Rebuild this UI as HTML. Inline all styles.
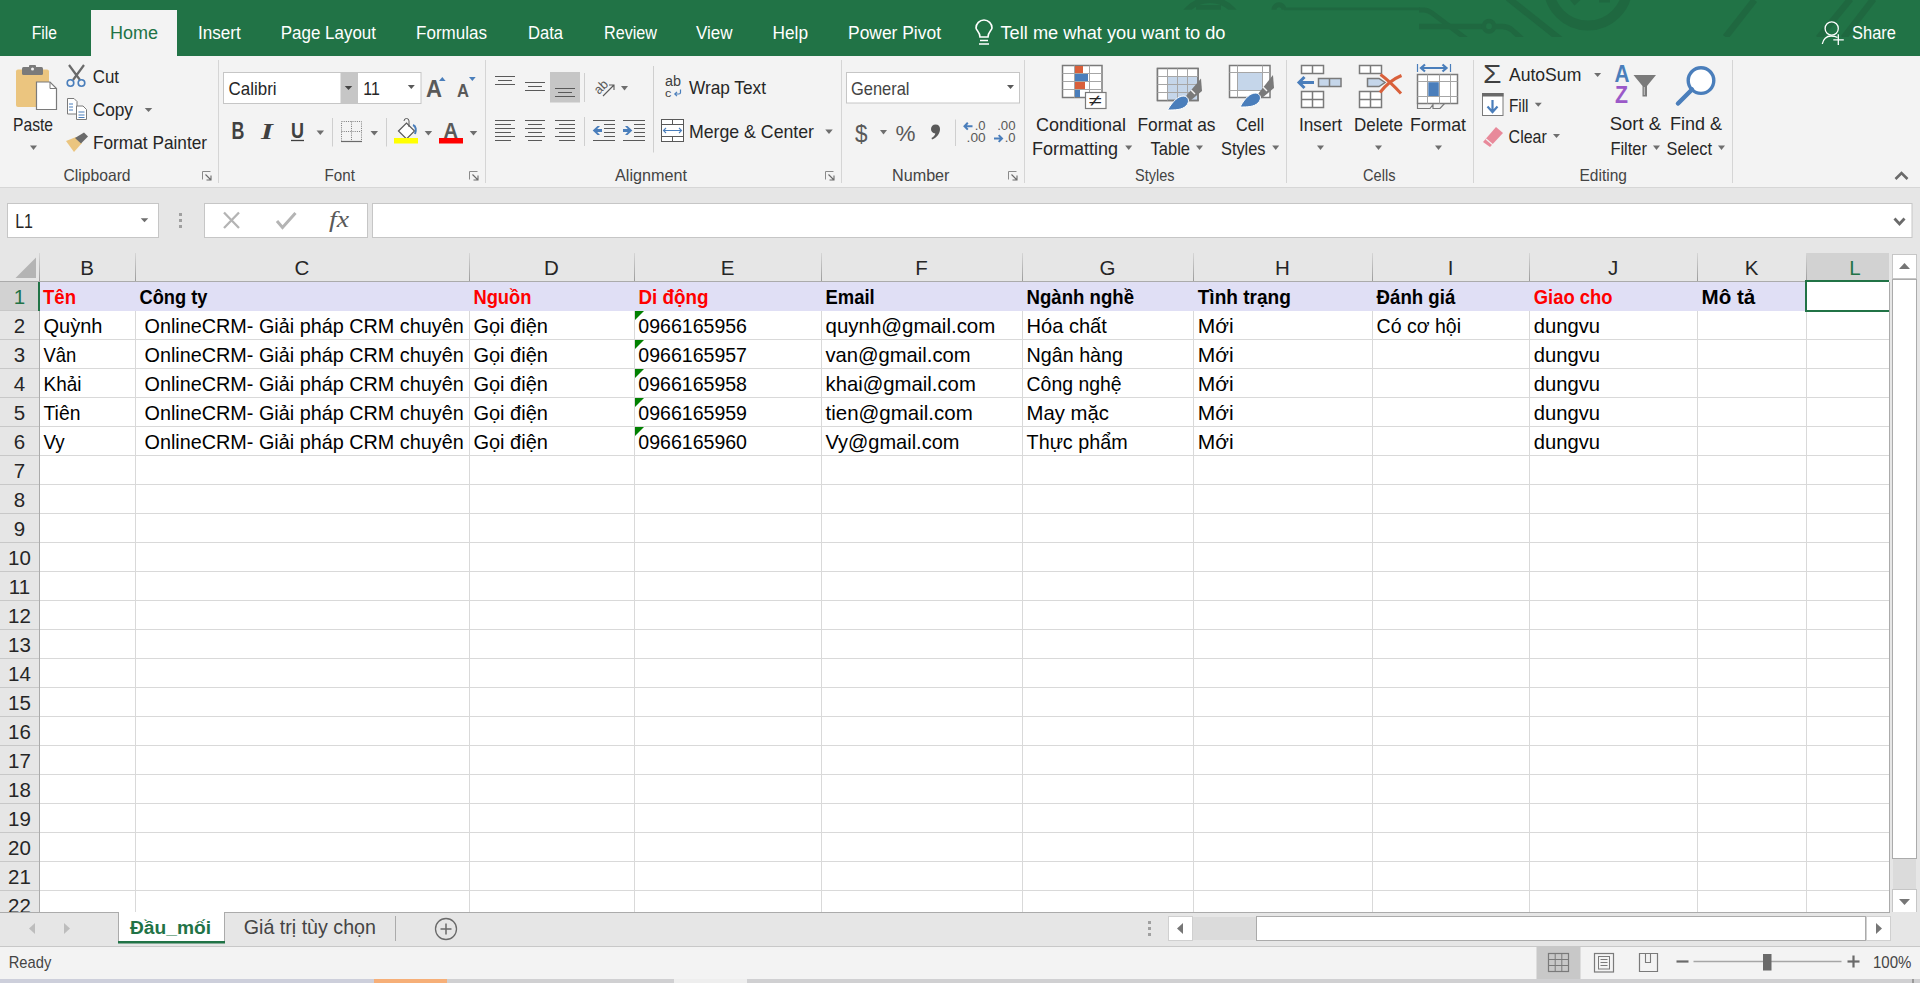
<!DOCTYPE html>
<html><head><meta charset="utf-8"><title>Excel</title>
<style>html,body{margin:0;padding:0;width:1920px;height:983px;overflow:hidden;background:#F3F3F3}
svg{display:block} text{font-family:"Liberation Sans",sans-serif}</style></head>
<body><svg width="1920" height="983" viewBox="0 0 1920 983" shape-rendering="geometricPrecision">
<rect x="0" y="0" width="1920" height="56" fill="#217346" />
<defs><clipPath id="cp"><rect x="1100" y="0" width="820" height="37"/></clipPath><clipPath id="cp2"><rect x="1100" y="0" width="200" height="9.8"/></clipPath></defs>
<g clip-path="url(#cp2)">
<circle cx="1210" cy="31" r="31" fill="none" stroke="#1F6840" stroke-width="6"/>
<rect x="1196" y="5" width="25" height="5" fill="#1F6840" />
<circle cx="1279" cy="9.8" r="5" fill="none" stroke="#1F6840" stroke-width="5"/>
</g>
<g clip-path="url(#cp)">
<path d="M1284,8.9 L1420,8.9" fill="none" stroke="#1F6840" stroke-width="2.6" />
<path d="M1419,10 L1424,10 C1427,10 1429,11 1432,13 L1467,39.5" fill="none" stroke="#1F6840" stroke-width="5" />
<path d="M1419,26.5 L1482,26.5" fill="none" stroke="#1F6840" stroke-width="5.5" />
<path d="M1450,17 L1470,39" fill="none" stroke="#1F6840" stroke-width="0" />
<circle cx="1489" cy="26.3" r="5.2" fill="none" stroke="#1F6840" stroke-width="4.5"/>
<path d="M1495,26.5 L1502,26.5 C1506,26.5 1509,27.5 1512,30 L1522,39" fill="none" stroke="#1F6840" stroke-width="5.5" />
<path d="M1508,-2 L1561,40" fill="none" stroke="#1F6840" stroke-width="6.5" />
<circle cx="1588" cy="-14" r="39.5" fill="none" stroke="#1F6840" stroke-width="10"/>
<path d="M1570,0 L1574.5,5.6 L1580.5,0 Z" fill="#1F6840" />
<rect x="1599" y="0" width="11" height="2.5" fill="#1F6840" />
<path d="M1754.5,0 L1725.5,37" fill="none" stroke="#1F6840" stroke-width="6.5" />
<path d="M1850.5,-1 L1818.5,38" fill="none" stroke="#1F6840" stroke-width="6.5" />
<path d="M1873.5,-1 L1843.5,38" fill="none" stroke="#1F6840" stroke-width="6.5" />
</g>
<rect x="91" y="10" width="86" height="46" fill="#F3F3F3" />
<text x="31.8" y="38.8" font-size="18.75" fill="#FFFFFF" textLength="25.2" lengthAdjust="spacingAndGlyphs">File</text>
<text x="197.9" y="38.8" font-size="18.75" fill="#FFFFFF" textLength="42.8" lengthAdjust="spacingAndGlyphs">Insert</text>
<text x="280.8" y="38.8" font-size="18.75" fill="#FFFFFF" textLength="95.2" lengthAdjust="spacingAndGlyphs">Page Layout</text>
<text x="416" y="38.8" font-size="18.75" fill="#FFFFFF" textLength="71.0" lengthAdjust="spacingAndGlyphs">Formulas</text>
<text x="528" y="38.8" font-size="18.75" fill="#FFFFFF" textLength="35.0" lengthAdjust="spacingAndGlyphs">Data</text>
<text x="604" y="38.8" font-size="18.75" fill="#FFFFFF" textLength="53.0" lengthAdjust="spacingAndGlyphs">Review</text>
<text x="696" y="38.8" font-size="18.75" fill="#FFFFFF" textLength="36.5" lengthAdjust="spacingAndGlyphs">View</text>
<text x="772.5" y="38.8" font-size="18.75" fill="#FFFFFF" textLength="35.5" lengthAdjust="spacingAndGlyphs">Help</text>
<text x="848" y="38.8" font-size="18.75" fill="#FFFFFF" textLength="93.0" lengthAdjust="spacingAndGlyphs">Power Pivot</text>
<text x="1000.5" y="38.8" font-size="18.75" fill="#FFFFFF" textLength="225.0" lengthAdjust="spacingAndGlyphs">Tell me what you want to do</text>
<text x="1852" y="38.8" font-size="18.75" fill="#FFFFFF" textLength="44.0" lengthAdjust="spacingAndGlyphs">Share</text>
<text x="110" y="38.8" font-size="18.75" fill="#217346" textLength="48.0" lengthAdjust="spacingAndGlyphs">Home</text>
<path d="M979,44 L989,44 M980,40.5 L988,40.5 M980,37 C980,32 976,30 976,28 A8,8 0 1 1 992,28 C992,30 988,32 988,37 Z" fill="none" stroke="#FFFFFF" stroke-width="1.6" />
<path d="M1822.3,44 C1823,39.5 1826.5,36 1831,36 C1833,36 1835.5,36.3 1837.5,37.5" fill="none" stroke="#FFFFFF" stroke-width="1.3" />
<circle cx="1831.7" cy="28.5" r="6.6" fill="none" stroke="#FFFFFF" stroke-width="1.3"/>
<path d="M1833.3,39.8 L1843.8,39.8 M1838.3,34.2 L1838.3,45" fill="none" stroke="#FFFFFF" stroke-width="1.3" />
<rect x="0" y="56" width="1920" height="131" fill="#F3F3F3" />
<line x1="0" y1="187.5" x2="1920" y2="187.5" stroke="#D6D6D6" stroke-width="1" />
<rect x="0" y="188" width="1920" height="65" fill="#E6E6E6" />
<line x1="218.5" y1="60" x2="218.5" y2="183" stroke="#D5D5D5" stroke-width="1" />
<line x1="485.5" y1="60" x2="485.5" y2="183" stroke="#D5D5D5" stroke-width="1" />
<line x1="841.5" y1="60" x2="841.5" y2="183" stroke="#D5D5D5" stroke-width="1" />
<line x1="1024.5" y1="60" x2="1024.5" y2="183" stroke="#D5D5D5" stroke-width="1" />
<line x1="1286.5" y1="60" x2="1286.5" y2="183" stroke="#D5D5D5" stroke-width="1" />
<line x1="1473.5" y1="60" x2="1473.5" y2="183" stroke="#D5D5D5" stroke-width="1" />
<line x1="1732.5" y1="60" x2="1732.5" y2="183" stroke="#D5D5D5" stroke-width="1" />
<text x="63.4" y="180.6" font-size="16.28" fill="#444444" textLength="67.2" lengthAdjust="spacingAndGlyphs">Clipboard</text>
<text x="324.6" y="180.6" font-size="16.28" fill="#444444" textLength="30.4" lengthAdjust="spacingAndGlyphs">Font</text>
<text x="615" y="180.6" font-size="16.28" fill="#444444" textLength="72.0" lengthAdjust="spacingAndGlyphs">Alignment</text>
<text x="892" y="180.6" font-size="16.28" fill="#444444" textLength="57.5" lengthAdjust="spacingAndGlyphs">Number</text>
<text x="1135" y="180.6" font-size="16.28" fill="#444444" textLength="39.5" lengthAdjust="spacingAndGlyphs">Styles</text>
<text x="1363" y="180.6" font-size="16.28" fill="#444444" textLength="32.5" lengthAdjust="spacingAndGlyphs">Cells</text>
<text x="1579.5" y="180.6" font-size="16.28" fill="#444444" textLength="47.5" lengthAdjust="spacingAndGlyphs">Editing</text>
<path d="M202.5,179.5 L202.5,171.5 L210.5,171.5" fill="none" stroke="#8A8A8A" stroke-width="1" />
<path d="M205.5,174.5 L211.0,180.0 M211.0,175.5 L211.0,180.0 L206.5,180.0" fill="none" stroke="#6A6A6A" stroke-width="1.1" />
<path d="M469.5,179.5 L469.5,171.5 L477.5,171.5" fill="none" stroke="#8A8A8A" stroke-width="1" />
<path d="M472.5,174.5 L478.0,180.0 M478.0,175.5 L478.0,180.0 L473.5,180.0" fill="none" stroke="#6A6A6A" stroke-width="1.1" />
<path d="M825.5,179.5 L825.5,171.5 L833.5,171.5" fill="none" stroke="#8A8A8A" stroke-width="1" />
<path d="M828.5,174.5 L834.0,180.0 M834.0,175.5 L834.0,180.0 L829.5,180.0" fill="none" stroke="#6A6A6A" stroke-width="1.1" />
<path d="M1008.5,179.5 L1008.5,171.5 L1016.5,171.5" fill="none" stroke="#8A8A8A" stroke-width="1" />
<path d="M1011.5,174.5 L1017.0,180.0 M1017.0,175.5 L1017.0,180.0 L1012.5,180.0" fill="none" stroke="#6A6A6A" stroke-width="1.1" />
<path d="M1895.5,179 L1901.5,173 L1907.5,179" fill="none" stroke="#6A6A6A" stroke-width="2.6" />
<rect x="16" y="69.5" width="33" height="37.5" fill="#EBC57F" rx="2"/>
<rect x="22" y="67" width="21" height="8" fill="#7A7A7A" rx="1.5"/>
<rect x="29" y="65" width="7" height="5" fill="#7A7A7A" rx="1"/>
<circle cx="32.5" cy="69" r="1.5" fill="#F3F3F3"/>
<path d="M36.5,82 L50,82 L56.5,88.5 L56.5,109.5 L36.5,109.5 Z" fill="#FFFFFF" stroke="#7A7A7A" stroke-width="1.2" />
<path d="M50,82 L50,88.5 L56.5,88.5" fill="none" stroke="#7A7A7A" stroke-width="1" />
<text x="13" y="131" font-size="18.60" fill="#262626" textLength="40.0" lengthAdjust="spacingAndGlyphs">Paste</text>
<path d="M30.0,145.5 L37.0,145.5 L33.5,150.0 Z" fill="#6E6E6E" />
<path d="M69,65 L80,80 M84,65 L73,80" fill="none" stroke="#6A6A6A" stroke-width="2.2" />
<circle cx="70.5" cy="83" r="3.3" fill="none" stroke="#4A7EBB" stroke-width="1.6"/>
<circle cx="81.5" cy="83" r="3.3" fill="none" stroke="#4A7EBB" stroke-width="1.6"/>
<text x="92.7" y="83" font-size="18.60" fill="#262626" textLength="26.3" lengthAdjust="spacingAndGlyphs">Cut</text>
<path d="M67.5,98.5 L74,98.5 L77,101.5 L77,114 L67.5,114 Z" fill="#FFFFFF" stroke="#7A7A7A" stroke-width="1" />
<path d="M76.5,106 L83,106 L86.5,109.5 L86.5,119.5 L76.5,119.5 Z" fill="#FFFFFF" stroke="#7A7A7A" stroke-width="1" />
<line x1="69" y1="104" x2="73" y2="104" stroke="#4A7EBB" stroke-width="1" />
<line x1="69" y1="107" x2="73" y2="107" stroke="#4A7EBB" stroke-width="1" />
<line x1="69" y1="110" x2="73" y2="110" stroke="#4A7EBB" stroke-width="1" />
<line x1="78.5" y1="112" x2="84.5" y2="112" stroke="#4A7EBB" stroke-width="1" />
<line x1="78.5" y1="115" x2="84.5" y2="115" stroke="#4A7EBB" stroke-width="1" />
<line x1="78.5" y1="117.5" x2="84.5" y2="117.5" stroke="#4A7EBB" stroke-width="1" />
<text x="92.7" y="115.5" font-size="18.60" fill="#262626" textLength="40.3" lengthAdjust="spacingAndGlyphs">Copy</text>
<path d="M144.75,108 L152.25,108 L148.5,112 Z" fill="#6E6E6E" />
<path d="M66,141 L76,137 L82,143 L74,152 Z" fill="#EBC57F" />
<path d="M75,138 L84,132.5 L88,136.5 L81,143.5 Z" fill="#6A6A6A" />
<text x="93" y="149" font-size="18.60" fill="#262626" textLength="114.0" lengthAdjust="spacingAndGlyphs">Format Painter</text>
<rect x="223.5" y="72.5" width="133" height="31" fill="#FFFFFF" stroke="#C6C6C6" stroke-width="1" />
<rect x="340.5" y="73" width="16" height="30" fill="#C6C6C6" />
<path d="M344.75,86 L352.25,86 L348.5,90 Z" fill="#444444" />
<text x="228.6" y="94.7" font-size="17.73" fill="#262626" textLength="48.0" lengthAdjust="spacingAndGlyphs">Calibri</text>
<rect x="357.5" y="72.5" width="63.5" height="31" fill="#FFFFFF" stroke="#C6C6C6" stroke-width="1" />
<text x="363.3" y="94.7" font-size="17.73" fill="#262626" textLength="16.5" lengthAdjust="spacingAndGlyphs">11</text>
<path d="M407.8,85 L414.8,85 L411.3,89 Z" fill="#595959" />
<text x="426" y="96.8" font-size="23.98" fill="#595959" font-weight="bold" textLength="16.0" lengthAdjust="spacingAndGlyphs">A</text>
<path d="M439,81 L442.3,77 L445.6,81 Z" fill="#4A7EBB" />
<text x="457" y="96.8" font-size="18.60" fill="#595959" font-weight="bold" textLength="12.0" lengthAdjust="spacingAndGlyphs">A</text>
<path d="M469,77 L475.7,77 L472.35,81 Z" fill="#4A7EBB" />
<text x="231.5" y="139" font-size="23.98" fill="#404040" font-weight="bold" textLength="12.9" lengthAdjust="spacingAndGlyphs">B</text>
<text x="261" y="139" font-size="23" fill="#404040" style="font-family:Liberation Serif;font-style:italic;font-weight:bold" textLength="12" lengthAdjust="spacingAndGlyphs">I</text>
<text x="291" y="138.2" font-size="22.97" fill="#404040" font-weight="bold" textLength="13.0" lengthAdjust="spacingAndGlyphs">U</text>
<line x1="291" y1="140.5" x2="304" y2="140.5" stroke="#404040" stroke-width="1.3" />
<path d="M316.55,130.5 L324.05,130.5 L320.3,135.0 Z" fill="#6E6E6E" />
<line x1="332.5" y1="118" x2="332.5" y2="146.5" stroke="#CFCFCF" stroke-width="1" />
<path d="M341.5,121.5 L361.5,121.5 L361.5,141.5 M341.5,141.5 L341.5,121.5 M351.5,121.5 L351.5,141.5 M341.5,131.5 L361.5,131.5" fill="none" stroke="#7A7A7A" stroke-width="1" stroke-dasharray="1,1.2"/>
<line x1="341" y1="141.5" x2="362" y2="141.5" stroke="#6A6A6A" stroke-width="1.2" />
<path d="M370.55,131 L378.05,131 L374.3,135.5 Z" fill="#6E6E6E" />
<line x1="386.5" y1="118" x2="386.5" y2="146.5" stroke="#CFCFCF" stroke-width="1" />
<path d="M398.5,131 L406.5,123 L414.5,131 L406.5,139 Z" fill="#FFFFFF" stroke="#595959" stroke-width="1.2" />
<path d="M404,121 A2.5,2.5 0 0 1 409,121 L409,127" fill="none" stroke="#595959" stroke-width="1" />
<path d="M413,125 C416,126 416.5,130 415,134" fill="none" stroke="#4A7EBB" stroke-width="2" />
<rect x="394" y="138" width="24" height="5.5" fill="#FFFF00" />
<path d="M424.65,131 L432.15,131 L428.4,135.5 Z" fill="#6E6E6E" />
<text x="443.5" y="137.6" font-size="22.67" fill="#595959" font-weight="bold" textLength="14.5" lengthAdjust="spacingAndGlyphs">A</text>
<rect x="439" y="138" width="24" height="5.5" fill="#FF0000" />
<path d="M469.75,131 L477.25,131 L473.5,135.5 Z" fill="#6E6E6E" />
<line x1="495" y1="76.5" x2="515" y2="76.5" stroke="#595959" stroke-width="1" />
<line x1="498" y1="80.5" x2="512" y2="80.5" stroke="#595959" stroke-width="1" />
<line x1="495" y1="84.5" x2="515" y2="84.5" stroke="#595959" stroke-width="1" />
<line x1="525" y1="82.5" x2="545" y2="82.5" stroke="#595959" stroke-width="1" />
<line x1="528" y1="86.5" x2="542" y2="86.5" stroke="#595959" stroke-width="1" />
<line x1="525" y1="90.5" x2="545" y2="90.5" stroke="#595959" stroke-width="1" />
<rect x="550" y="72" width="30" height="30.5" fill="#C6C6C6" />
<line x1="555" y1="88.5" x2="575" y2="88.5" stroke="#595959" stroke-width="1" />
<line x1="558" y1="92.5" x2="572" y2="92.5" stroke="#595959" stroke-width="1" />
<line x1="555" y1="96.5" x2="575" y2="96.5" stroke="#595959" stroke-width="1" />
<line x1="584.5" y1="73" x2="584.5" y2="102" stroke="#CFCFCF" stroke-width="1" />
<text x="0" y="0" font-size="13" fill="#595959" transform="translate(599,95) rotate(-45)" textLength="14" lengthAdjust="spacingAndGlyphs">ab</text>
<path d="M603,96 L614,85 M609,85 L614,85 L614,90" fill="none" stroke="#595959" stroke-width="1.1" />
<path d="M621.0,86 L628.0,86 L624.5,90.5 Z" fill="#6E6E6E" />
<line x1="653.5" y1="66" x2="653.5" y2="152.5" stroke="#CFCFCF" stroke-width="1" />
<text x="665" y="86" font-size="14.53" fill="#404040" textLength="16.0" lengthAdjust="spacingAndGlyphs">ab</text>
<text x="665" y="96.5" font-size="11.00" fill="#404040" textLength="6.3" lengthAdjust="spacingAndGlyphs">c</text>
<path d="M680.5,89.5 L680.5,92.5 C680.5,93.5 680,94 679,94 L675,94 M677,91.8 L674.8,94 L677,96.2" fill="none" stroke="#4A7EBB" stroke-width="1.2" />
<text x="689" y="94" font-size="18.60" fill="#262626" textLength="77.0" lengthAdjust="spacingAndGlyphs">Wrap Text</text>
<line x1="495" y1="120.5" x2="515" y2="120.5" stroke="#595959" stroke-width="1" />
<line x1="495" y1="124.5" x2="511" y2="124.5" stroke="#595959" stroke-width="1" />
<line x1="495" y1="128.5" x2="515" y2="128.5" stroke="#595959" stroke-width="1" />
<line x1="495" y1="132.5" x2="511" y2="132.5" stroke="#595959" stroke-width="1" />
<line x1="495" y1="136.5" x2="515" y2="136.5" stroke="#595959" stroke-width="1" />
<line x1="495" y1="140.5" x2="511" y2="140.5" stroke="#595959" stroke-width="1" />
<line x1="525" y1="120.5" x2="545" y2="120.5" stroke="#595959" stroke-width="1" />
<line x1="528" y1="124.5" x2="542" y2="124.5" stroke="#595959" stroke-width="1" />
<line x1="525" y1="128.5" x2="545" y2="128.5" stroke="#595959" stroke-width="1" />
<line x1="528" y1="132.5" x2="542" y2="132.5" stroke="#595959" stroke-width="1" />
<line x1="525" y1="136.5" x2="545" y2="136.5" stroke="#595959" stroke-width="1" />
<line x1="528" y1="140.5" x2="542" y2="140.5" stroke="#595959" stroke-width="1" />
<line x1="555" y1="120.5" x2="575" y2="120.5" stroke="#595959" stroke-width="1" />
<line x1="559" y1="124.5" x2="575" y2="124.5" stroke="#595959" stroke-width="1" />
<line x1="555" y1="128.5" x2="575" y2="128.5" stroke="#595959" stroke-width="1" />
<line x1="559" y1="132.5" x2="575" y2="132.5" stroke="#595959" stroke-width="1" />
<line x1="555" y1="136.5" x2="575" y2="136.5" stroke="#595959" stroke-width="1" />
<line x1="559" y1="140.5" x2="575" y2="140.5" stroke="#595959" stroke-width="1" />
<line x1="584.5" y1="117" x2="584.5" y2="146" stroke="#CFCFCF" stroke-width="1" />
<line x1="593" y1="120.5" x2="615" y2="120.5" stroke="#595959" stroke-width="1" />
<line x1="604" y1="124.5" x2="615" y2="124.5" stroke="#595959" stroke-width="1" />
<line x1="604" y1="128.5" x2="615" y2="128.5" stroke="#595959" stroke-width="1" />
<line x1="604" y1="132.5" x2="615" y2="132.5" stroke="#595959" stroke-width="1" />
<line x1="604" y1="136.5" x2="615" y2="136.5" stroke="#595959" stroke-width="1" />
<line x1="593" y1="140.5" x2="615" y2="140.5" stroke="#595959" stroke-width="1" />
<path d="M597.5,126 L592.7,130.5 L597.5,135 L600,135 L597.2,132 L602,132 L602,129 L597.2,129 L600,126 Z" fill="#4A7EBB" />
<line x1="623" y1="120.5" x2="645" y2="120.5" stroke="#595959" stroke-width="1" />
<line x1="634" y1="124.5" x2="645" y2="124.5" stroke="#595959" stroke-width="1" />
<line x1="634" y1="128.5" x2="645" y2="128.5" stroke="#595959" stroke-width="1" />
<line x1="634" y1="132.5" x2="645" y2="132.5" stroke="#595959" stroke-width="1" />
<line x1="634" y1="136.5" x2="645" y2="136.5" stroke="#595959" stroke-width="1" />
<line x1="623" y1="140.5" x2="645" y2="140.5" stroke="#595959" stroke-width="1" />
<path d="M627.5,126 L632.3,130.5 L627.5,135 L625,135 L627.8,132 L623,132 L623,129 L627.8,129 L625,126 Z" fill="#4A7EBB" />
<rect x="661.5" y="119.5" width="22" height="22" fill="#FFFFFF" stroke="#595959" stroke-width="1" />
<line x1="661.5" y1="124.5" x2="683.5" y2="124.5" stroke="#595959" stroke-width="1" />
<line x1="661.5" y1="136.5" x2="683.5" y2="136.5" stroke="#595959" stroke-width="1" />
<line x1="672.5" y1="119.5" x2="672.5" y2="124.5" stroke="#595959" stroke-width="1" />
<line x1="672.5" y1="136.5" x2="672.5" y2="141.5" stroke="#595959" stroke-width="1" />
<path d="M663.5,130.5 L681.5,130.5 M666,128 L663.5,130.5 L666,133 M679,128 L681.5,130.5 L679,133" fill="none" stroke="#4A7EBB" stroke-width="1.1" />
<text x="689" y="138" font-size="18.60" fill="#262626" textLength="125.0" lengthAdjust="spacingAndGlyphs">Merge &amp; Center</text>
<path d="M825.25,129.5 L832.75,129.5 L829,134.0 Z" fill="#6E6E6E" />
<rect x="846.5" y="72.5" width="173" height="30.5" fill="#FFFFFF" stroke="#C6C6C6" stroke-width="1" />
<text x="851" y="95" font-size="18.60" fill="#444444" textLength="58.5" lengthAdjust="spacingAndGlyphs">General</text>
<path d="M1007.0,85 L1014.0,85 L1010.5,89 Z" fill="#595959" />
<text x="855" y="141.5" font-size="23.98" fill="#595959" textLength="12.5" lengthAdjust="spacingAndGlyphs">$</text>
<path d="M880.0,130 L887.0,130 L883.5,134.5 Z" fill="#6E6E6E" />
<text x="895.5" y="141" font-size="21.80" fill="#595959" textLength="20.0" lengthAdjust="spacingAndGlyphs">%</text>
<path d="M935.5,124.5 C938.5,124.5 940,126.5 940,129 C940,133.5 937,137.5 932,139.5 L931.5,138 C934,136.5 935,135 935.3,133.5 C932.5,133.3 931,131.5 931,129 C931,126.5 933,124.5 935.5,124.5 Z" fill="#595959" />
<line x1="955.5" y1="119.5" x2="955.5" y2="146" stroke="#CFCFCF" stroke-width="1" />
<text x="974.7" y="129.6" font-size="11.92" fill="#595959" textLength="10.9" lengthAdjust="spacingAndGlyphs">.0</text>
<text x="966.6" y="141.9" font-size="11.92" fill="#595959" textLength="19.0" lengthAdjust="spacingAndGlyphs">.00</text>
<path d="M964.5,126.2 L972.5,126.2 M967.8,122.8 L964.5,126.2 L967.8,129.6" fill="none" stroke="#4A7EBB" stroke-width="2" />
<text x="997.2" y="129.6" font-size="11.92" fill="#595959" textLength="18.4" lengthAdjust="spacingAndGlyphs">.00</text>
<text x="1004.7" y="141.9" font-size="11.92" fill="#595959" textLength="10.9" lengthAdjust="spacingAndGlyphs">.0</text>
<path d="M994,138.5 L1002,138.5 M998.7,135.1 L1002,138.5 L998.7,141.9" fill="none" stroke="#4A7EBB" stroke-width="2" />
<rect x="1062.5" y="65.5" width="39.5" height="32" fill="#FFFFFF" stroke="#7A7A7A" stroke-width="1.5" />
<line x1="1074.5" y1="65.5" x2="1074.5" y2="97.5" stroke="#A6A6A6" stroke-width="1" />
<line x1="1089.5" y1="65.5" x2="1089.5" y2="97.5" stroke="#A6A6A6" stroke-width="1" />
<line x1="1062.5" y1="73.5" x2="1102" y2="73.5" stroke="#A6A6A6" stroke-width="1" />
<line x1="1062.5" y1="81.5" x2="1102" y2="81.5" stroke="#A6A6A6" stroke-width="1" />
<line x1="1062.5" y1="89.5" x2="1102" y2="89.5" stroke="#A6A6A6" stroke-width="1" />
<rect x="1075" y="66" width="8" height="7" fill="#D9603B" />
<rect x="1075" y="74" width="13" height="7" fill="#4A7EBB" />
<rect x="1075" y="82" width="10" height="7" fill="#D9603B" />
<rect x="1075" y="90" width="5" height="7" fill="#4A7EBB" />
<rect x="1085.5" y="92.5" width="20.5" height="16" fill="#FFFFFF" stroke="#7A7A7A" stroke-width="1.2" />
<text x="1089" y="106" font-size="16" fill="#262626" textLength="13" lengthAdjust="spacingAndGlyphs">≠</text>
<text x="1036" y="131" font-size="18.60" fill="#262626" textLength="90.0" lengthAdjust="spacingAndGlyphs">Conditional</text>
<text x="1032" y="155" font-size="18.60" fill="#262626" textLength="86.0" lengthAdjust="spacingAndGlyphs">Formatting</text>
<path d="M1125.2,145.5 L1132.2,145.5 L1128.7,150.0 Z" fill="#6E6E6E" />
<rect x="1167.5" y="76" width="30.5" height="24.5" fill="#C5D6EA" />
<rect x="1157.5" y="68.5" width="40.5" height="32" fill="none" stroke="#7A7A7A" stroke-width="1.5" />
<path d="M1158,69 L1198,69 L1198,76 L1167.5,76 L1167.5,100 L1158,100 Z" fill="#FFFFFF"/>
<rect x="1157.5" y="68.5" width="40.5" height="32" fill="none" stroke="#7A7A7A" stroke-width="1.5" />
<line x1="1167.5" y1="68.5" x2="1167.5" y2="100.5" stroke="#A6A6A6" stroke-width="1" />
<line x1="1177.5" y1="68.5" x2="1177.5" y2="100.5" stroke="#A6A6A6" stroke-width="1" />
<line x1="1187.5" y1="68.5" x2="1187.5" y2="100.5" stroke="#A6A6A6" stroke-width="1" />
<line x1="1157.5" y1="76.5" x2="1198" y2="76.5" stroke="#A6A6A6" stroke-width="1" />
<line x1="1157.5" y1="84.5" x2="1198" y2="84.5" stroke="#A6A6A6" stroke-width="1" />
<line x1="1157.5" y1="92.5" x2="1198" y2="92.5" stroke="#A6A6A6" stroke-width="1" />
<path d="M1186,96 L1201,78.5 L1202,91 L1190,101 Z" fill="#7A7A7A" />
<path d="M1191,90 L1195,94" fill="none" stroke="#F3F3F3" stroke-width="1.5" />
<path d="M1167.5,110 C1173,101 1178,96 1184,96 C1189,97 1190,102 1186,106 C1182,110 1175,110 1167.5,110 Z" fill="#4A7EBB" stroke="#FFFFFF" stroke-width="1" />
<text x="1137.5" y="131" font-size="18.60" fill="#262626" textLength="78.0" lengthAdjust="spacingAndGlyphs">Format as</text>
<text x="1150.5" y="155" font-size="18.60" fill="#262626" textLength="39.5" lengthAdjust="spacingAndGlyphs">Table</text>
<path d="M1196.0,145.5 L1203.0,145.5 L1199.5,150.0 Z" fill="#6E6E6E" />
<rect x="1229.5" y="65.5" width="40.5" height="32" fill="#FFFFFF" stroke="#7A7A7A" stroke-width="1.5" />
<rect x="1237.5" y="72.5" width="25" height="18" fill="#C5D6EA" />
<line x1="1237.5" y1="65.5" x2="1237.5" y2="97.5" stroke="#A6A6A6" stroke-width="1" />
<line x1="1262.5" y1="65.5" x2="1262.5" y2="97.5" stroke="#A6A6A6" stroke-width="1" />
<line x1="1229.5" y1="72.5" x2="1270" y2="72.5" stroke="#A6A6A6" stroke-width="1" />
<line x1="1229.5" y1="90.5" x2="1270" y2="90.5" stroke="#A6A6A6" stroke-width="1" />
<path d="M1258,94 L1273,75 L1274,88 L1262,98 Z" fill="#7A7A7A" />
<path d="M1263,87 L1267,91" fill="none" stroke="#F3F3F3" stroke-width="1.5" />
<path d="M1240,107 C1245,98 1250,93 1256,93 C1261,94 1262,99 1258,103 C1254,107 1247,107 1240,107 Z" fill="#4A7EBB" stroke="#FFFFFF" stroke-width="1" />
<text x="1236" y="131" font-size="18.60" fill="#262626" textLength="28.0" lengthAdjust="spacingAndGlyphs">Cell</text>
<text x="1221" y="155" font-size="18.60" fill="#262626" textLength="44.5" lengthAdjust="spacingAndGlyphs">Styles</text>
<path d="M1272.2,145.5 L1279.2,145.5 L1275.7,150.0 Z" fill="#6E6E6E" />
<rect x="1301.5" y="65.5" width="22" height="8" fill="#FFFFFF" stroke="#7A7A7A" stroke-width="1.5" />
<line x1="1312.5" y1="65.5" x2="1312.5" y2="73.5" stroke="#7A7A7A" stroke-width="1.5" />
<rect x="1318.5" y="78.5" width="22.5" height="8" fill="#C5D6EA" stroke="#7A7A7A" stroke-width="1.5" />
<line x1="1329.5" y1="78.5" x2="1329.5" y2="86.5" stroke="#7A7A7A" stroke-width="1.5" />
<rect x="1301.5" y="91.5" width="22" height="16" fill="#FFFFFF" stroke="#7A7A7A" stroke-width="1.5" />
<line x1="1312.5" y1="91.5" x2="1312.5" y2="107.5" stroke="#7A7A7A" stroke-width="1.5" />
<line x1="1301.5" y1="99.5" x2="1323.5" y2="99.5" stroke="#7A7A7A" stroke-width="1.5" />
<path d="M1314,82.5 L1301,82.5 M1304.5,77 L1299,82.5 L1304.5,88" fill="none" stroke="#4A7EBB" stroke-width="3" />
<text x="1299" y="131" font-size="18.60" fill="#262626" textLength="43.0" lengthAdjust="spacingAndGlyphs">Insert</text>
<path d="M1317.0,145.5 L1324.0,145.5 L1320.5,150.0 Z" fill="#6E6E6E" />
<rect x="1359.5" y="65.5" width="22" height="8" fill="#FFFFFF" stroke="#7A7A7A" stroke-width="1.5" />
<line x1="1370.5" y1="65.5" x2="1370.5" y2="73.5" stroke="#7A7A7A" stroke-width="1.5" />
<path d="M1367.5,78.5 L1379,78.5 L1385,82.5 L1379,86.5 L1367.5,86.5 Z" fill="#C5D6EA" stroke="#7A7A7A" stroke-width="1.5" />
<rect x="1359.5" y="91.5" width="22" height="16" fill="#FFFFFF" stroke="#7A7A7A" stroke-width="1.5" />
<line x1="1370.5" y1="91.5" x2="1370.5" y2="107.5" stroke="#7A7A7A" stroke-width="1.5" />
<line x1="1359.5" y1="99.5" x2="1381.5" y2="99.5" stroke="#7A7A7A" stroke-width="1.5" />
<path d="M1380.5,74.5 C1388,80 1395,87 1401,93.5 M1401.5,75.5 C1393,79 1385,86 1380,92.5" fill="none" stroke="#D9603B" stroke-width="3" />
<text x="1354" y="131" font-size="18.60" fill="#262626" textLength="49.0" lengthAdjust="spacingAndGlyphs">Delete</text>
<path d="M1375.0,145.5 L1382.0,145.5 L1378.5,150.0 Z" fill="#6E6E6E" />
<rect x="1417.5" y="74.5" width="40" height="29" fill="#FFFFFF" stroke="#7A7A7A" stroke-width="1.5" />
<line x1="1427.5" y1="74.5" x2="1427.5" y2="103.5" stroke="#A6A6A6" stroke-width="1" />
<line x1="1439.5" y1="74.5" x2="1439.5" y2="103.5" stroke="#A6A6A6" stroke-width="1" />
<line x1="1450.5" y1="74.5" x2="1450.5" y2="103.5" stroke="#A6A6A6" stroke-width="1" />
<line x1="1417.5" y1="81.5" x2="1457.5" y2="81.5" stroke="#A6A6A6" stroke-width="1" />
<line x1="1417.5" y1="96.5" x2="1457.5" y2="96.5" stroke="#A6A6A6" stroke-width="1" />
<rect x="1428.3" y="82.2" width="10.5" height="13.8" fill="#4A7EBB" />
<path d="M1417.5,103.5 L1417.5,108.5 L1430,108.5 L1433,104.5 L1433,108.5 L1440,108.5 L1444.5,103.5" fill="none" stroke="#7A7A7A" stroke-width="1.2" />
<path d="M1421,68 L1446.5,68 M1425,64.5 L1421,68 L1425,71.5 M1442.5,64.5 L1446.5,68 L1442.5,71.5" fill="none" stroke="#4A7EBB" stroke-width="2.2" />
<line x1="1417.5" y1="64" x2="1417.5" y2="72" stroke="#4A7EBB" stroke-width="1.2" />
<line x1="1450.5" y1="64" x2="1450.5" y2="72" stroke="#4A7EBB" stroke-width="1.2" />
<text x="1410" y="131" font-size="18.60" fill="#262626" textLength="56.0" lengthAdjust="spacingAndGlyphs">Format</text>
<path d="M1435.0,145.5 L1442.0,145.5 L1438.5,150.0 Z" fill="#6E6E6E" />
<text x="1483" y="83" font-size="26" fill="#404040" textLength="18.5" lengthAdjust="spacingAndGlyphs">Σ</text>
<text x="1508.9" y="81" font-size="18.60" fill="#262626" textLength="72.4" lengthAdjust="spacingAndGlyphs">AutoSum</text>
<path d="M1594.1,73 L1601.1,73 L1597.6,77 Z" fill="#6E6E6E" />
<rect x="1482.5" y="93.5" width="20.5" height="22" fill="#FFFFFF" stroke="#7A7A7A" stroke-width="1" />
<rect x="1482" y="93" width="21.5" height="3.5" fill="#6A6A6A" />
<path d="M1492.5,100 L1492.5,112 M1487.5,106.5 L1492.5,112 L1497.5,106.5" fill="none" stroke="#4A7EBB" stroke-width="2.2" />
<text x="1508.9" y="111.5" font-size="18.60" fill="#262626" textLength="19.6" lengthAdjust="spacingAndGlyphs">Fill</text>
<path d="M1534.8,102.7 L1541.8,102.7 L1538.3,106.7 Z" fill="#6E6E6E" />
<path d="M1483,142 L1496,127 L1503,133 L1490,147 Z" fill="#E8899A" />
<path d="M1486,139 L1493,145" fill="none" stroke="#F3F3F3" stroke-width="1.3" />
<text x="1508.6" y="142.6" font-size="18.60" fill="#262626" textLength="38.2" lengthAdjust="spacingAndGlyphs">Clear</text>
<path d="M1553.0,134 L1560.0,134 L1556.5,138 Z" fill="#6E6E6E" />
<text x="1614.5" y="81.7" font-size="24" font-weight="bold" fill="#4A7EBB" textLength="15" lengthAdjust="spacingAndGlyphs">A</text>
<text x="1615" y="102.7" font-size="23" font-weight="bold" fill="#9B59C8" textLength="13" lengthAdjust="spacingAndGlyphs">Z</text>
<path d="M1633.5,75 L1656,75 L1647,86 L1647,96.5 L1642.5,96.5 L1642.5,86 Z" fill="#7A7A7A" />
<path d="M1644.3,87 L1644.3,95" fill="none" stroke="#C8C8C8" stroke-width="1" />
<circle cx="1701" cy="80.6" r="12.8" fill="#FFFFFF" stroke="#4A7EBB" stroke-width="3.4"/>
<path d="M1692,89.5 L1678,103.5" fill="none" stroke="#4A7EBB" stroke-width="4.5" stroke-linecap="round"/>
<text x="1609.7" y="130.4" font-size="18.60" fill="#262626" textLength="51.5" lengthAdjust="spacingAndGlyphs">Sort &amp;</text>
<text x="1670" y="130.4" font-size="18.60" fill="#262626" textLength="52.0" lengthAdjust="spacingAndGlyphs">Find &amp;</text>
<text x="1610.4" y="154.5" font-size="18.60" fill="#262626" textLength="36.6" lengthAdjust="spacingAndGlyphs">Filter</text>
<text x="1666.6" y="154.5" font-size="18.60" fill="#262626" textLength="45.4" lengthAdjust="spacingAndGlyphs">Select</text>
<path d="M1653.0,145.5 L1660.0,145.5 L1656.5,150.0 Z" fill="#6E6E6E" />
<path d="M1718.0,145.5 L1725.0,145.5 L1721.5,150.0 Z" fill="#6E6E6E" />
<rect x="7.5" y="203.5" width="151" height="34" fill="#FFFFFF" stroke="#C6C6C6" stroke-width="1" />
<text x="15.2" y="227.7" font-size="19.33" fill="#262626" textLength="17.8" lengthAdjust="spacingAndGlyphs">L1</text>
<path d="M140.75,218.2 L148.25,218.2 L144.5,222.2 Z" fill="#6E6E6E" />
<rect x="179" y="213" width="3" height="3" fill="#A0A0A0" />
<rect x="179" y="219" width="3" height="3" fill="#A0A0A0" />
<rect x="179" y="225" width="3" height="3" fill="#A0A0A0" />
<rect x="204.5" y="203.5" width="163" height="34" fill="#FFFFFF" stroke="#C6C6C6" stroke-width="1" />
<path d="M224,212.5 L239,228 M239,212.5 L224,228" fill="none" stroke="#B4B4B4" stroke-width="2.3" />
<path d="M277,221 L282.5,227.5 L295.5,213" fill="none" stroke="#B4B4B4" stroke-width="3" />
<text x="329" y="226.5" font-size="24" style="font-family:Liberation Serif;font-style:italic" fill="#595959" textLength="20" lengthAdjust="spacingAndGlyphs">fx</text>
<rect x="372.5" y="203.5" width="1539.5" height="34" fill="#FFFFFF" stroke="#C6C6C6" stroke-width="1" />
<path d="M1894.5,218.5 L1899.5,224 L1904.5,218.5" fill="none" stroke="#6A6A6A" stroke-width="2.8" />
<rect x="0" y="253" width="1890" height="28" fill="#E6E6E6" />
<rect x="1806" y="253" width="83" height="28" fill="#D2D2D2" />
<defs><linearGradient id="hg" x1="0" y1="0" x2="0" y2="1"><stop offset="0" stop-color="#D6D6D6"/><stop offset="1" stop-color="#9C9C9C"/></linearGradient></defs>
<rect x="135" y="253" width="1" height="28" fill="url(#hg)" />
<rect x="469" y="253" width="1" height="28" fill="url(#hg)" />
<rect x="634" y="253" width="1" height="28" fill="url(#hg)" />
<rect x="821" y="253" width="1" height="28" fill="url(#hg)" />
<rect x="1022" y="253" width="1" height="28" fill="url(#hg)" />
<rect x="1193" y="253" width="1" height="28" fill="url(#hg)" />
<rect x="1372" y="253" width="1" height="28" fill="url(#hg)" />
<rect x="1529" y="253" width="1" height="28" fill="url(#hg)" />
<rect x="1697" y="253" width="1" height="28" fill="url(#hg)" />
<rect x="1806" y="253" width="1" height="28" fill="url(#hg)" />
<path d="M15.5,278 L36,278 L36,257.5 Z" fill="#B4B4B4" />
<rect x="39" y="253" width="1" height="28" fill="url(#hg)" />
<line x1="0" y1="281.5" x2="1889" y2="281.5" stroke="#ABABAB" stroke-width="1" />
<text x="87.0" y="275" font-size="20.5" fill="#262626" text-anchor="middle">B</text>
<text x="302.0" y="275" font-size="20.5" fill="#262626" text-anchor="middle">C</text>
<text x="551.5" y="275" font-size="20.5" fill="#262626" text-anchor="middle">D</text>
<text x="727.5" y="275" font-size="20.5" fill="#262626" text-anchor="middle">E</text>
<text x="921.5" y="275" font-size="20.5" fill="#262626" text-anchor="middle">F</text>
<text x="1107.5" y="275" font-size="20.5" fill="#262626" text-anchor="middle">G</text>
<text x="1282.5" y="275" font-size="20.5" fill="#262626" text-anchor="middle">H</text>
<text x="1450.5" y="275" font-size="20.5" fill="#262626" text-anchor="middle">I</text>
<text x="1613.0" y="275" font-size="20.5" fill="#262626" text-anchor="middle">J</text>
<text x="1751.5" y="275" font-size="20.5" fill="#262626" text-anchor="middle">K</text>
<text x="1855" y="275" font-size="20.5" fill="#217346" text-anchor="middle">L</text>
<rect x="40" y="282" width="1849" height="630" fill="#FFFFFF" />
<rect x="40" y="282" width="1766" height="29" fill="#E0DFF5" />
<rect x="0" y="282" width="39" height="630" fill="#E6E6E6" />
<rect x="0" y="282" width="39" height="29" fill="#D2D2D2" />
<line x1="0" y1="310.5" x2="39" y2="310.5" stroke="#C8C8C8" stroke-width="1" />
<line x1="1806" y1="310.5" x2="1889" y2="310.5" stroke="#D9D9D9" stroke-width="1" />
<line x1="0" y1="339.5" x2="39" y2="339.5" stroke="#C8C8C8" stroke-width="1" />
<line x1="40" y1="339.5" x2="1889" y2="339.5" stroke="#D9D9D9" stroke-width="1" />
<line x1="0" y1="368.5" x2="39" y2="368.5" stroke="#C8C8C8" stroke-width="1" />
<line x1="40" y1="368.5" x2="1889" y2="368.5" stroke="#D9D9D9" stroke-width="1" />
<line x1="0" y1="397.5" x2="39" y2="397.5" stroke="#C8C8C8" stroke-width="1" />
<line x1="40" y1="397.5" x2="1889" y2="397.5" stroke="#D9D9D9" stroke-width="1" />
<line x1="0" y1="426.5" x2="39" y2="426.5" stroke="#C8C8C8" stroke-width="1" />
<line x1="40" y1="426.5" x2="1889" y2="426.5" stroke="#D9D9D9" stroke-width="1" />
<line x1="0" y1="455.5" x2="39" y2="455.5" stroke="#C8C8C8" stroke-width="1" />
<line x1="40" y1="455.5" x2="1889" y2="455.5" stroke="#D9D9D9" stroke-width="1" />
<line x1="0" y1="484.5" x2="39" y2="484.5" stroke="#C8C8C8" stroke-width="1" />
<line x1="40" y1="484.5" x2="1889" y2="484.5" stroke="#D9D9D9" stroke-width="1" />
<line x1="0" y1="513.5" x2="39" y2="513.5" stroke="#C8C8C8" stroke-width="1" />
<line x1="40" y1="513.5" x2="1889" y2="513.5" stroke="#D9D9D9" stroke-width="1" />
<line x1="0" y1="542.5" x2="39" y2="542.5" stroke="#C8C8C8" stroke-width="1" />
<line x1="40" y1="542.5" x2="1889" y2="542.5" stroke="#D9D9D9" stroke-width="1" />
<line x1="0" y1="571.5" x2="39" y2="571.5" stroke="#C8C8C8" stroke-width="1" />
<line x1="40" y1="571.5" x2="1889" y2="571.5" stroke="#D9D9D9" stroke-width="1" />
<line x1="0" y1="600.5" x2="39" y2="600.5" stroke="#C8C8C8" stroke-width="1" />
<line x1="40" y1="600.5" x2="1889" y2="600.5" stroke="#D9D9D9" stroke-width="1" />
<line x1="0" y1="629.5" x2="39" y2="629.5" stroke="#C8C8C8" stroke-width="1" />
<line x1="40" y1="629.5" x2="1889" y2="629.5" stroke="#D9D9D9" stroke-width="1" />
<line x1="0" y1="658.5" x2="39" y2="658.5" stroke="#C8C8C8" stroke-width="1" />
<line x1="40" y1="658.5" x2="1889" y2="658.5" stroke="#D9D9D9" stroke-width="1" />
<line x1="0" y1="687.5" x2="39" y2="687.5" stroke="#C8C8C8" stroke-width="1" />
<line x1="40" y1="687.5" x2="1889" y2="687.5" stroke="#D9D9D9" stroke-width="1" />
<line x1="0" y1="716.5" x2="39" y2="716.5" stroke="#C8C8C8" stroke-width="1" />
<line x1="40" y1="716.5" x2="1889" y2="716.5" stroke="#D9D9D9" stroke-width="1" />
<line x1="0" y1="745.5" x2="39" y2="745.5" stroke="#C8C8C8" stroke-width="1" />
<line x1="40" y1="745.5" x2="1889" y2="745.5" stroke="#D9D9D9" stroke-width="1" />
<line x1="0" y1="774.5" x2="39" y2="774.5" stroke="#C8C8C8" stroke-width="1" />
<line x1="40" y1="774.5" x2="1889" y2="774.5" stroke="#D9D9D9" stroke-width="1" />
<line x1="0" y1="803.5" x2="39" y2="803.5" stroke="#C8C8C8" stroke-width="1" />
<line x1="40" y1="803.5" x2="1889" y2="803.5" stroke="#D9D9D9" stroke-width="1" />
<line x1="0" y1="832.5" x2="39" y2="832.5" stroke="#C8C8C8" stroke-width="1" />
<line x1="40" y1="832.5" x2="1889" y2="832.5" stroke="#D9D9D9" stroke-width="1" />
<line x1="0" y1="861.5" x2="39" y2="861.5" stroke="#C8C8C8" stroke-width="1" />
<line x1="40" y1="861.5" x2="1889" y2="861.5" stroke="#D9D9D9" stroke-width="1" />
<line x1="0" y1="890.5" x2="39" y2="890.5" stroke="#C8C8C8" stroke-width="1" />
<line x1="40" y1="890.5" x2="1889" y2="890.5" stroke="#D9D9D9" stroke-width="1" />
<line x1="0" y1="919.5" x2="39" y2="919.5" stroke="#C8C8C8" stroke-width="1" />
<line x1="40" y1="919.5" x2="1889" y2="919.5" stroke="#D9D9D9" stroke-width="1" />
<line x1="135.5" y1="311" x2="135.5" y2="912" stroke="#D9D9D9" stroke-width="1" />
<line x1="469.5" y1="311" x2="469.5" y2="912" stroke="#D9D9D9" stroke-width="1" />
<line x1="634.5" y1="311" x2="634.5" y2="912" stroke="#D9D9D9" stroke-width="1" />
<line x1="821.5" y1="311" x2="821.5" y2="912" stroke="#D9D9D9" stroke-width="1" />
<line x1="1022.5" y1="311" x2="1022.5" y2="912" stroke="#D9D9D9" stroke-width="1" />
<line x1="1193.5" y1="311" x2="1193.5" y2="912" stroke="#D9D9D9" stroke-width="1" />
<line x1="1372.5" y1="311" x2="1372.5" y2="912" stroke="#D9D9D9" stroke-width="1" />
<line x1="1529.5" y1="311" x2="1529.5" y2="912" stroke="#D9D9D9" stroke-width="1" />
<line x1="1697.5" y1="311" x2="1697.5" y2="912" stroke="#D9D9D9" stroke-width="1" />
<line x1="1806.5" y1="311" x2="1806.5" y2="912" stroke="#D9D9D9" stroke-width="1" />
<line x1="39.5" y1="281" x2="39.5" y2="912" stroke="#ABABAB" stroke-width="1" />
<line x1="39" y1="282" x2="39" y2="311" stroke="#217346" stroke-width="2" />
<line x1="1889.5" y1="282" x2="1889.5" y2="912" stroke="#ABABAB" stroke-width="1" />
<text x="19.5" y="304.4" font-size="20.5" fill="#217346" text-anchor="middle">1</text>
<text x="19.5" y="333.4" font-size="20.5" fill="#262626" text-anchor="middle">2</text>
<text x="19.5" y="362.4" font-size="20.5" fill="#262626" text-anchor="middle">3</text>
<text x="19.5" y="391.4" font-size="20.5" fill="#262626" text-anchor="middle">4</text>
<text x="19.5" y="420.4" font-size="20.5" fill="#262626" text-anchor="middle">5</text>
<text x="19.5" y="449.4" font-size="20.5" fill="#262626" text-anchor="middle">6</text>
<text x="19.5" y="478.4" font-size="20.5" fill="#262626" text-anchor="middle">7</text>
<text x="19.5" y="507.4" font-size="20.5" fill="#262626" text-anchor="middle">8</text>
<text x="19.5" y="536.4" font-size="20.5" fill="#262626" text-anchor="middle">9</text>
<text x="19.5" y="565.4" font-size="20.5" fill="#262626" text-anchor="middle">10</text>
<text x="19.5" y="594.4" font-size="20.5" fill="#262626" text-anchor="middle">11</text>
<text x="19.5" y="623.4" font-size="20.5" fill="#262626" text-anchor="middle">12</text>
<text x="19.5" y="652.4" font-size="20.5" fill="#262626" text-anchor="middle">13</text>
<text x="19.5" y="681.4" font-size="20.5" fill="#262626" text-anchor="middle">14</text>
<text x="19.5" y="710.4" font-size="20.5" fill="#262626" text-anchor="middle">15</text>
<text x="19.5" y="739.4" font-size="20.5" fill="#262626" text-anchor="middle">16</text>
<text x="19.5" y="768.4" font-size="20.5" fill="#262626" text-anchor="middle">17</text>
<text x="19.5" y="797.4" font-size="20.5" fill="#262626" text-anchor="middle">18</text>
<text x="19.5" y="826.4" font-size="20.5" fill="#262626" text-anchor="middle">19</text>
<text x="19.5" y="855.4" font-size="20.5" fill="#262626" text-anchor="middle">20</text>
<text x="19.5" y="884.4" font-size="20.5" fill="#262626" text-anchor="middle">21</text>
<text x="19.5" y="913.4" font-size="20.5" fill="#262626" text-anchor="middle">22</text>
<text x="43" y="304.4" font-size="20.64" fill="#FF0000" font-weight="bold" textLength="33.0" lengthAdjust="spacingAndGlyphs">Tên</text>
<text x="139.5" y="304.4" font-size="20.64" fill="#000" font-weight="bold" textLength="68.0" lengthAdjust="spacingAndGlyphs">Công ty</text>
<text x="473.4" y="304.4" font-size="20.64" fill="#FF0000" font-weight="bold" textLength="58.1" lengthAdjust="spacingAndGlyphs">Nguồn</text>
<text x="638.5" y="304.4" font-size="20.64" fill="#FF0000" font-weight="bold" textLength="70.1" lengthAdjust="spacingAndGlyphs">Di động</text>
<text x="825.5" y="304.4" font-size="20.64" fill="#000" font-weight="bold" textLength="49.2" lengthAdjust="spacingAndGlyphs">Email</text>
<text x="1026.6" y="304.4" font-size="20.64" fill="#000" font-weight="bold" textLength="107.4" lengthAdjust="spacingAndGlyphs">Ngành nghề</text>
<text x="1197.7" y="304.4" font-size="20.64" fill="#000" font-weight="bold" textLength="93.2" lengthAdjust="spacingAndGlyphs">Tình trạng</text>
<text x="1376.6" y="304.4" font-size="20.64" fill="#000" font-weight="bold" textLength="78.7" lengthAdjust="spacingAndGlyphs">Đánh giá</text>
<text x="1533.75" y="304.4" font-size="20.64" fill="#FF0000" font-weight="bold" textLength="78.8" lengthAdjust="spacingAndGlyphs">Giao cho</text>
<text x="1701.6" y="304.4" font-size="20.64" fill="#000" font-weight="bold" textLength="53.7" lengthAdjust="spacingAndGlyphs">Mô tả</text>
<text x="43.5" y="333.2" font-size="20.64" fill="#000" textLength="59.0" lengthAdjust="spacingAndGlyphs">Quỳnh</text>
<text x="144.5" y="333.2" font-size="20.64" fill="#000" textLength="319.2" lengthAdjust="spacingAndGlyphs">OnlineCRM- Giải pháp CRM chuyên</text>
<text x="473.4" y="333.2" font-size="20.64" fill="#000" textLength="74.6" lengthAdjust="spacingAndGlyphs">Gọi điện</text>
<text x="638.3" y="333.2" font-size="20.64" fill="#000" textLength="108.7" lengthAdjust="spacingAndGlyphs">0966165956</text>
<text x="825.5" y="333.2" font-size="20.64" fill="#000" textLength="169.8" lengthAdjust="spacingAndGlyphs">quynh@gmail.com</text>
<text x="1026.6" y="333.2" font-size="20.64" fill="#000" textLength="80.2" lengthAdjust="spacingAndGlyphs">Hóa chất</text>
<text x="1197.7" y="333.2" font-size="20.64" fill="#000" textLength="35.9" lengthAdjust="spacingAndGlyphs">Mới</text>
<text x="1376.6" y="333.2" font-size="20.64" fill="#000" textLength="84.4" lengthAdjust="spacingAndGlyphs">Có cơ hội</text>
<text x="1533.75" y="333.2" font-size="20.64" fill="#000" textLength="66.2" lengthAdjust="spacingAndGlyphs">dungvu</text>
<path d="M635,311 L644,311 L635,320 Z" fill="#008000" />
<text x="43.5" y="362.2" font-size="20.64" fill="#000" textLength="32.8" lengthAdjust="spacingAndGlyphs">Vân</text>
<text x="144.5" y="362.2" font-size="20.64" fill="#000" textLength="319.2" lengthAdjust="spacingAndGlyphs">OnlineCRM- Giải pháp CRM chuyên</text>
<text x="473.4" y="362.2" font-size="20.64" fill="#000" textLength="74.6" lengthAdjust="spacingAndGlyphs">Gọi điện</text>
<text x="638.3" y="362.2" font-size="20.64" fill="#000" textLength="108.7" lengthAdjust="spacingAndGlyphs">0966165957</text>
<text x="825.5" y="362.2" font-size="20.64" fill="#000" textLength="145.1" lengthAdjust="spacingAndGlyphs">van@gmail.com</text>
<text x="1026.6" y="362.2" font-size="20.64" fill="#000" textLength="96.4" lengthAdjust="spacingAndGlyphs">Ngân hàng</text>
<text x="1197.7" y="362.2" font-size="20.64" fill="#000" textLength="35.9" lengthAdjust="spacingAndGlyphs">Mới</text>
<text x="1533.75" y="362.2" font-size="20.64" fill="#000" textLength="66.2" lengthAdjust="spacingAndGlyphs">dungvu</text>
<path d="M635,340 L644,340 L635,349 Z" fill="#008000" />
<text x="43.5" y="391.2" font-size="20.64" fill="#000" textLength="37.9" lengthAdjust="spacingAndGlyphs">Khải</text>
<text x="144.5" y="391.2" font-size="20.64" fill="#000" textLength="319.2" lengthAdjust="spacingAndGlyphs">OnlineCRM- Giải pháp CRM chuyên</text>
<text x="473.4" y="391.2" font-size="20.64" fill="#000" textLength="74.6" lengthAdjust="spacingAndGlyphs">Gọi điện</text>
<text x="638.3" y="391.2" font-size="20.64" fill="#000" textLength="108.7" lengthAdjust="spacingAndGlyphs">0966165958</text>
<text x="825.5" y="391.2" font-size="20.64" fill="#000" textLength="150.3" lengthAdjust="spacingAndGlyphs">khai@gmail.com</text>
<text x="1026.6" y="391.2" font-size="20.64" fill="#000" textLength="95.0" lengthAdjust="spacingAndGlyphs">Công nghệ</text>
<text x="1197.7" y="391.2" font-size="20.64" fill="#000" textLength="35.9" lengthAdjust="spacingAndGlyphs">Mới</text>
<text x="1533.75" y="391.2" font-size="20.64" fill="#000" textLength="66.2" lengthAdjust="spacingAndGlyphs">dungvu</text>
<path d="M635,369 L644,369 L635,378 Z" fill="#008000" />
<text x="43.5" y="420.2" font-size="20.64" fill="#000" textLength="36.9" lengthAdjust="spacingAndGlyphs">Tiên</text>
<text x="144.5" y="420.2" font-size="20.64" fill="#000" textLength="319.2" lengthAdjust="spacingAndGlyphs">OnlineCRM- Giải pháp CRM chuyên</text>
<text x="473.4" y="420.2" font-size="20.64" fill="#000" textLength="74.6" lengthAdjust="spacingAndGlyphs">Gọi điện</text>
<text x="638.3" y="420.2" font-size="20.64" fill="#000" textLength="108.7" lengthAdjust="spacingAndGlyphs">0966165959</text>
<text x="825.5" y="420.2" font-size="20.64" fill="#000" textLength="147.2" lengthAdjust="spacingAndGlyphs">tien@gmail.com</text>
<text x="1026.6" y="420.2" font-size="20.64" fill="#000" textLength="82.4" lengthAdjust="spacingAndGlyphs">May mặc</text>
<text x="1197.7" y="420.2" font-size="20.64" fill="#000" textLength="35.9" lengthAdjust="spacingAndGlyphs">Mới</text>
<text x="1533.75" y="420.2" font-size="20.64" fill="#000" textLength="66.2" lengthAdjust="spacingAndGlyphs">dungvu</text>
<path d="M635,398 L644,398 L635,407 Z" fill="#008000" />
<text x="43.5" y="449.2" font-size="20.64" fill="#000" textLength="21.2" lengthAdjust="spacingAndGlyphs">Vy</text>
<text x="144.5" y="449.2" font-size="20.64" fill="#000" textLength="319.2" lengthAdjust="spacingAndGlyphs">OnlineCRM- Giải pháp CRM chuyên</text>
<text x="473.4" y="449.2" font-size="20.64" fill="#000" textLength="74.6" lengthAdjust="spacingAndGlyphs">Gọi điện</text>
<text x="638.3" y="449.2" font-size="20.64" fill="#000" textLength="108.7" lengthAdjust="spacingAndGlyphs">0966165960</text>
<text x="825.5" y="449.2" font-size="20.64" fill="#000" textLength="133.9" lengthAdjust="spacingAndGlyphs">Vy@gmail.com</text>
<text x="1026.6" y="449.2" font-size="20.64" fill="#000" textLength="101.0" lengthAdjust="spacingAndGlyphs">Thực phẩm</text>
<text x="1197.7" y="449.2" font-size="20.64" fill="#000" textLength="35.9" lengthAdjust="spacingAndGlyphs">Mới</text>
<text x="1533.75" y="449.2" font-size="20.64" fill="#000" textLength="66.2" lengthAdjust="spacingAndGlyphs">dungvu</text>
<path d="M635,427 L644,427 L635,436 Z" fill="#008000" />
<path d="M1889,281 L1806,281 L1806,311 L1889,311" fill="none" stroke="#217346" stroke-width="2" />
<line x1="1889.5" y1="282" x2="1889.5" y2="912" stroke="#ABABAB" stroke-width="1" />
<rect x="1890" y="253" width="30" height="660" fill="#E6E6E6" />
<rect x="1892.5" y="254.5" width="24" height="24" fill="#FFFFFF" stroke="#C6C6C6" stroke-width="1" />
<path d="M1899,269 L1910,269 L1904.5,263 Z" fill="#767676" />
<rect x="1892.5" y="279.5" width="24" height="579" fill="#FFFFFF" stroke="#ABABAB" stroke-width="1" />
<rect x="1893" y="859" width="23" height="30.5" fill="#DBDBDB" />
<rect x="1892.5" y="889.5" width="24" height="23.5" fill="#FFFFFF" stroke="#C6C6C6" stroke-width="1" />
<path d="M1899,899 L1910,899 L1904.5,905 Z" fill="#767676" />
<rect x="0" y="912" width="1920" height="35" fill="#E6E6E6" />
<line x1="0" y1="912.5" x2="1890" y2="912.5" stroke="#ABABAB" stroke-width="1" />
<line x1="0" y1="946.5" x2="1920" y2="946.5" stroke="#C8C8C8" stroke-width="1" />
<rect x="118.5" y="912" width="106" height="31" fill="#FFFFFF" />
<line x1="118.5" y1="912" x2="118.5" y2="943" stroke="#ABABAB" stroke-width="1" />
<line x1="224.5" y1="912" x2="224.5" y2="943" stroke="#ABABAB" stroke-width="1" />
<rect x="118" y="941" width="107" height="2.5" fill="#217346" />
<path d="M35,923 L29,928.5 L35,934 Z" fill="#BDBDBD" />
<path d="M64,923 L70,928.5 L64,934 Z" fill="#BDBDBD" />
<text x="130" y="933.75" font-size="19.19" fill="#217346" font-weight="bold" textLength="81.0" lengthAdjust="spacingAndGlyphs">Đầu_mối</text>
<text x="243.75" y="933.75" font-size="19.48" fill="#444444" textLength="132.2" lengthAdjust="spacingAndGlyphs">Giá trị tùy chọn</text>
<line x1="395.5" y1="916" x2="395.5" y2="941" stroke="#ABABAB" stroke-width="1" />
<circle cx="446" cy="929" r="10.5" fill="none" stroke="#6A6A6A" stroke-width="1.3"/>
<path d="M446,923.5 L446,934.5 M440.5,929 L451.5,929" fill="none" stroke="#6A6A6A" stroke-width="1.5" />
<rect x="1148" y="921" width="3" height="3" fill="#A0A0A0" />
<rect x="1148" y="927" width="3" height="3" fill="#A0A0A0" />
<rect x="1148" y="933" width="3" height="3" fill="#A0A0A0" />
<rect x="1168.5" y="916.5" width="24" height="24" fill="#FFFFFF" stroke="#D0D0D0" stroke-width="1" />
<path d="M1183,923 L1177,928.5 L1183,934 Z" fill="#767676" />
<rect x="1193" y="917" width="63" height="23" fill="#DBDBDB" />
<rect x="1256.5" y="916.5" width="609" height="24" fill="#FFFFFF" stroke="#ABABAB" stroke-width="1" />
<rect x="1866.5" y="916.5" width="24" height="24" fill="#FFFFFF" stroke="#D0D0D0" stroke-width="1" />
<path d="M1876,923 L1882,928.5 L1876,934 Z" fill="#767676" />
<rect x="0" y="947" width="1920" height="32" fill="#F3F3F3" />
<text x="8.75" y="967.5" font-size="15.70" fill="#444444" textLength="42.5" lengthAdjust="spacingAndGlyphs">Ready</text>
<rect x="1536.5" y="947" width="44" height="32" fill="#C8C8C8" />
<rect x="1548.5" y="953.5" width="20" height="18" fill="none" stroke="#7A7A7A" stroke-width="1.2" />
<line x1="1555.2" y1="953.5" x2="1555.2" y2="971.5" stroke="#7A7A7A" stroke-width="1" />
<line x1="1561.8" y1="953.5" x2="1561.8" y2="971.5" stroke="#7A7A7A" stroke-width="1" />
<line x1="1548.5" y1="959.5" x2="1568.5" y2="959.5" stroke="#7A7A7A" stroke-width="1" />
<line x1="1548.5" y1="965.5" x2="1568.5" y2="965.5" stroke="#7A7A7A" stroke-width="1" />
<rect x="1594.5" y="953.5" width="19" height="18.5" fill="none" stroke="#7A7A7A" stroke-width="1.2" />
<rect x="1598.5" y="956.5" width="11" height="12.5" fill="none" stroke="#7A7A7A" stroke-width="1" />
<line x1="1600.5" y1="959.5" x2="1607.5" y2="959.5" stroke="#7A7A7A" stroke-width="1" />
<line x1="1600.5" y1="962.5" x2="1607.5" y2="962.5" stroke="#7A7A7A" stroke-width="1" />
<line x1="1600.5" y1="965.5" x2="1607.5" y2="965.5" stroke="#7A7A7A" stroke-width="1" />
<path d="M1639.5,953.5 L1657.5,953.5 L1657.5,971.5 L1639.5,971.5 Z" fill="none" stroke="#7A7A7A" stroke-width="1.2" />
<path d="M1645.5,953.5 L1645.5,962.5 L1650.5,962.5 L1650.5,953.5" fill="none" stroke="#7A7A7A" stroke-width="1.1" />
<line x1="1676.5" y1="961.5" x2="1688.5" y2="961.5" stroke="#6A6A6A" stroke-width="2.2" />
<line x1="1693.5" y1="961.5" x2="1841.5" y2="961.5" stroke="#A6A6A6" stroke-width="1.4" />
<rect x="1763" y="954" width="8.5" height="16.5" fill="#6A6A6A" />
<line x1="1847.5" y1="961.5" x2="1859.5" y2="961.5" stroke="#6A6A6A" stroke-width="2.2" />
<line x1="1853.5" y1="955.5" x2="1853.5" y2="967.5" stroke="#6A6A6A" stroke-width="2.2" />
<text x="1873" y="967.5" font-size="15.99" fill="#444444" textLength="38.4" lengthAdjust="spacingAndGlyphs">100%</text>
<rect x="0" y="979" width="1920" height="4" fill="#D0D0D2" />
<rect x="0" y="979" width="374" height="4" fill="#CDCFDB" />
<rect x="374" y="979" width="73" height="4" fill="#F6AF78" />
<rect x="674" y="979" width="73" height="4" fill="#EEEEEE" />
<rect x="1912" y="979" width="2" height="4" fill="#9A9A9A" />
</svg></body></html>
